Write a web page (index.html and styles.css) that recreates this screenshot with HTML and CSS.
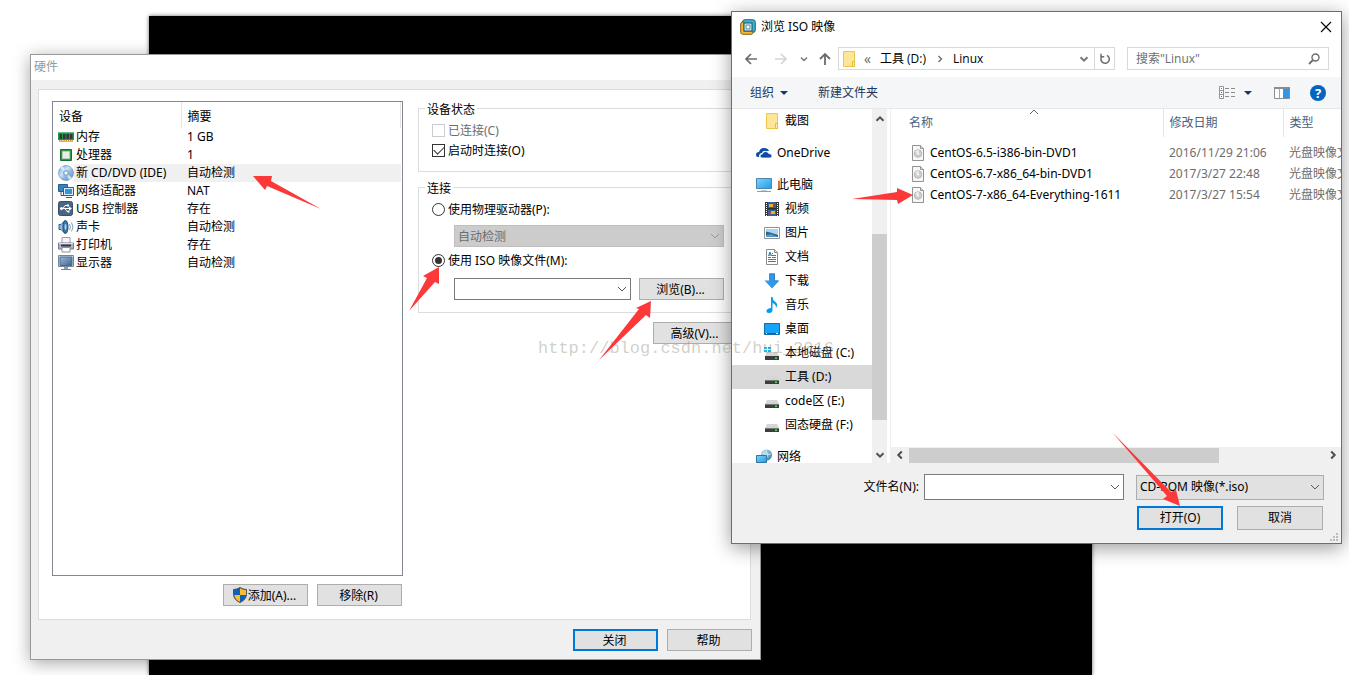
FILE: index.html
```html
<!DOCTYPE html>
<html lang="zh-CN">
<head>
<meta charset="utf-8">
<title>硬件</title>
<link rel="stylesheet" href="styles.css">
</head>
<body>
<svg class="defs" width="0" height="0" aria-hidden="true">
  <defs>
    <linearGradient id="screen" x1="0" y1="0" x2="1" y2="1"><stop offset="0" stop-color="#7fd3ff"/><stop offset="1" stop-color="#1f9be8"/></linearGradient>
    <linearGradient id="steel" x1="0" y1="0" x2="1" y2="1"><stop offset="0" stop-color="#9db9d6"/><stop offset="1" stop-color="#3d6490"/></linearGradient>
    <radialGradient id="globe" cx=".35" cy=".3" r=".8"><stop offset="0" stop-color="#bfe4f2"/><stop offset="1" stop-color="#2f7ea6"/></radialGradient>
    <linearGradient id="disc" x1="0" y1="0" x2="1" y2="1"><stop offset="0" stop-color="#6f9fd0"/><stop offset=".4" stop-color="#cfe2f4"/><stop offset=".6" stop-color="#8fb7de"/><stop offset="1" stop-color="#5f8fc4"/></linearGradient>
    <symbol id="chevron" viewBox="0 0 10 10"><path d="M1 3l4 4 4-4" fill="none" stroke="currentColor"/></symbol>
    <symbol id="thick-chevron" viewBox="0 0 10 10"><path d="M1.500 3.200L5 6.700l3.500-3.500" fill="none" stroke="currentColor" stroke-width="2"/></symbol>
    <symbol id="folder" viewBox="0 0 16 16"><path d="M2.500.5h11v15h-11z" fill="#ffe596" stroke="#edc64e"/><path d="M11.500 10.500h2v5h-2z" fill="#ffeeb5" stroke="#e8bc3a"/></symbol>
    <symbol id="drive" viewBox="0 0 16 16"><path d="M3 7h10l2 4H1z" fill="#d3d5d7"/><path d="M1 11h14v4H1z" fill="#3b3d40"/><path d="M1 11h14v1H1z" fill="#777"/><path d="M11 12.500h2v1.500h-2z" fill="#31ef3e"/></symbol>
    <symbol id="iso" viewBox="0 0 14 16"><path d="M1.500.5h8l3 3v12h-11z" fill="#f7f7f7" stroke="#929292"/><path d="M9.500.5v3h3" fill="#ddd" stroke="#929292"/><circle cx="7" cy="8.500" r="3.800" fill="#cdd1d1" stroke="#a3a8a8" stroke-width=".7"/><path d="M4 7a4 4 0 0 1 4-2L7 8z" fill="#eee"/><circle cx="7" cy="8.500" r="1" fill="#fff"/></symbol>
  </defs>
</svg>

<main class="desktop">
  <div class="console"></div>

  <section class="window hardware">
    <h1 class="hw-title">硬件</h1>
    <div class="hw-body">
      <div class="hw-panel">
        <div class="device-side">
          <div class="device-list">
            <table class="devices">
              <thead><tr><th>设备</th><th>摘要</th></tr></thead>
              <tbody>
                <tr><td><span class="device"><svg viewBox="0 0 16 16"><path d="M0 3h16v8H0z" fill="#1c9a4a"/><path d="M0 3h16v1H0z" fill="#5cc27e"/><path d="M1.500 5h2.500v5H1.500zM5 5h2.500v5H5zM8.500 5H11v5H8.500zM12 5h2.500v5H12z" fill="#34363a"/><path d="M1 11.500h14" stroke="#d59b2c" stroke-dasharray="1.500 .7"/><path d="M1 12.500h14" stroke="#a5c68e"/></svg><b>内存</b></span></td><td>1 GB</td></tr>
                <tr><td><span class="device"><svg viewBox="0 0 16 16"><path d="M2.500 2.500h11v11h-11z" fill="#2d9b48" stroke="#167030"/><path d="M4.500 4.500h7v7h-7z" fill="#ececec" stroke="#b3cdb9"/></svg><b>处理器</b></span></td><td>1</td></tr>
                <tr class="chosen"><td><span class="device"><svg viewBox="0 0 16 16"><circle cx="8" cy="8" r="7.500" fill="url(#disc)" stroke="#6790bd" stroke-width=".7"/><path d="M8 8L2 3l3-2zM8 8l6 5-3 2z" fill="#e7f2fb" opacity=".8"/><circle cx="8" cy="8" r="2.500" fill="#b6d0ea" stroke="#7ca2ca"/><circle cx="8" cy="8" r="1.200" fill="#fff"/></svg><b>新 CD/DVD (IDE)</b></span></td><td>自动检测</td></tr>
                <tr><td><span class="device"><svg viewBox="0 0 16 16"><path d="M.5 1.500h9v7h-9z" fill="#3683bd" stroke="#2c5d87"/><path d="M3 9v3.500h4" fill="none" stroke="#456"/><path d="M5.500 4.500h10v8h-10z" fill="#dceaf5" stroke="#3a5877"/><path d="M7 6h7v5H7z" fill="#2c97df"/><path d="M8 14.500h6" stroke="#3a5877"/></svg><b>网络适配器</b></span></td><td>NAT</td></tr>
                <tr><td><span class="device"><svg viewBox="0 0 16 16"><rect x=".5" y=".5" width="14" height="14" rx="2" fill="#4b6584" stroke="#36506d"/><path d="M2 7.500h10M5 7.500l2-3h3M7 7.500l2 3h2" fill="none" stroke="#fff"/><circle cx="3.500" cy="7.500" r="1.500" fill="#fff"/><path d="M11 5.500l3 2-3 2zM9 3.500h2v2H9zM9.500 9.500h2v2h-2z" fill="#fff"/></svg><b>USB 控制器</b></span></td><td>存在</td></tr>
                <tr><td><span class="device"><svg viewBox="0 0 16 16"><path d="M1 5.500h2L7 1.500v13L3 10.500H1z" fill="#8ebbe3" stroke="#335f89"/><ellipse cx="7.500" cy="8" rx="2.500" ry="6.500" fill="#3d77aa" stroke="#274a6b"/><ellipse cx="7.500" cy="8" rx="1" ry="3" fill="#aed5f4"/><path d="M11.500 5q2 3 0 6M13.500 3.500q3 4.500 0 9" fill="none" stroke="#7aa2c8"/></svg><b>声卡</b></span></td><td>自动检测</td></tr>
                <tr><td><span class="device"><svg viewBox="0 0 16 16"><path d="M4 .5h8v6H4z" fill="#f7f7fb" stroke="#9c9caf"/><path d="M.5 6h15v6H.5z" fill="#b3b3c1" stroke="#77778b"/><path d="M3 7.500h10v2H3z" fill="#333542"/><path d="M4 10.500h8V15H4z" fill="#fff" stroke="#8d8da0"/><path d="M1 6.500h14" stroke="#e4e4eb"/></svg><b>打印机</b></span></td><td>存在</td></tr>
                <tr><td><span class="device"><svg viewBox="0 0 16 16"><path d="M.5.500h15v11H.5z" fill="#d9e3ed" stroke="#71869a"/><path d="M2 2h12v8.500H2z" fill="url(#steel)" stroke="#496a8c"/><path d="M6 12h4v2H6z" fill="#8ca0b5"/><path d="M3 14.500h10" stroke="#71869a"/></svg><b>显示器</b></span></td><td>自动检测</td></tr>
              </tbody>
            </table>
          </div>
          <div class="device-actions">
            <button class="push"><svg class="shield" viewBox="0 0 14 16"><path d="M7 .5q3 2 6.500 2v5Q13 13 7 15.500 1 13 .5 7.500v-5Q4 2.500 7 .5z" fill="#0b62ba"/><path d="M7 1q3 2 6 2v5H7zM7 8v7Q2 13 1 8z" fill="#fcbd2f"/><path d="M7 .5q3 2 6.500 2v5Q13 13 7 15.500 1 13 .5 7.500v-5Q4 2.500 7 .5z" fill="none" stroke="#4b5258"/></svg>添加(A)...</button>
            <button class="push">移除(R)</button>
          </div>
        </div>

        <div class="settings">
          <fieldset class="group">
            <legend>设备状态</legend>
            <label class="option off"><input type="checkbox" disabled><span>已连接(C)</span></label>
            <label class="option"><input type="checkbox" checked><span>启动时连接(O)</span></label>
          </fieldset>
          <fieldset class="group connection">
            <legend>连接</legend>
            <label class="option"><input type="radio" name="source"><span>使用物理驱动器(P):</span></label>
            <div class="combo physical">
              <select disabled aria-label="物理驱动器"><option>自动检测</option></select>
              <svg class="combo-arrow"><use href="#chevron"/></svg>
            </div>
            <label class="option"><input type="radio" name="source" checked><span>使用 ISO 映像文件(M):</span></label>
            <div class="iso-row">
              <div class="combo">
                <select aria-label="ISO 映像文件"><option></option></select>
                <svg class="combo-arrow"><use href="#chevron"/></svg>
              </div>
              <button class="push">浏览(B)...</button>
            </div>
          </fieldset>
          <button class="push advanced">高级(V)...</button>
        </div>
      </div>
      <div class="hw-actions">
        <button class="push primary">关闭</button>
        <button class="push">帮助</button>
      </div>
    </div>
  </section>

  <section class="window browse">
    <header class="br-title">
      <svg class="app-icon" viewBox="0 0 16 16"><rect x="2.500" y=".7" width="12.800" height="12.800" rx="2.500" fill="#35b4d4" stroke="#246179"/><path d="M.7 5q0-2 2-2H4v9h9v1.300q0 2-2 2H3q-2.300 0-2.300-2.300z" fill="#f9b629" stroke="#7c6127"/><rect x="4" y="4" width="8" height="8" fill="#fff" stroke="#285a70" stroke-width="1.200"/><rect x="6" y="6" width="4" height="4" fill="#fff" stroke="#3a8ba8"/></svg>
      <h2>浏览 ISO 映像</h2>
      <button class="plain close" aria-label="关闭"><svg viewBox="0 0 12 12"><path d="M1 1l10 10M11 1L1 11" stroke="#000" stroke-width="1.100"/></svg></button>
    </header>

    <nav class="br-nav">
      <button class="plain step" aria-label="后退"><svg viewBox="0 0 14 14"><path d="M13 7H2M7 2L2 7l5 5" fill="none" stroke="#6b6b6b" stroke-width="1.700"/></svg></button>
      <button class="plain step" aria-label="前进"><svg viewBox="0 0 14 14"><path d="M1 7h11M7 2l5 5-5 5" fill="none" stroke="#d4d4d4" stroke-width="1.700"/></svg></button>
      <button class="plain recent" aria-label="最近的位置"><svg viewBox="0 0 10 10"><path d="M2 3.500l3 3 3-3" fill="none" stroke="#777" stroke-width="1.500"/></svg></button>
      <button class="plain up" aria-label="上移"><svg viewBox="0 0 14 14"><path d="M7 13V2M2 7l5-5 5 5" fill="none" stroke="#6b6b6b" stroke-width="1.800"/></svg></button>
      <div class="address">
        <svg class="icon16"><use href="#folder"/></svg>
        <span class="crumb-sep">«</span>
        <a href="#d">工具 (D:)</a>
        <svg class="crumb-arrow" viewBox="0 0 10 10"><path d="M3.500 2l3 3-3 3" fill="none" stroke="#666" stroke-width="1.300"/></svg>
        <a href="#linux">Linux</a>
        <svg class="address-arrow"><use href="#thick-chevron"/></svg>
        <button class="plain refresh" aria-label="刷新"><svg viewBox="0 0 12 12"><path d="M3 3.200A4.200 4.200 0 1 0 8 2.300M2 .8v3h3.200" fill="none" stroke="#6d6d6d" stroke-width="1.500"/></svg></button>
      </div>
      <div class="search">
        <input type="text" placeholder='搜索"Linux"' aria-label="搜索">
        <svg viewBox="0 0 12 12"><circle cx="7.500" cy="4.500" r="3.500" fill="none" stroke="#6d6d6d" stroke-width="1.400"/><path d="M5 7l-4 4" stroke="#6d6d6d" stroke-width="1.800"/></svg>
      </div>
    </nav>

    <div class="br-tools">
      <button class="plain organize">组织 <svg viewBox="0 0 8 4"><path d="M0 0h8L4 4z" fill="#1b3860"/></svg></button>
      <button class="plain">新建文件夹</button>
      <span class="view-tools">
        <button class="plain view" aria-label="视图"><svg viewBox="0 0 17 14"><path d="M.5.500h4v12h-4zM.5 4.500h4M.5 8.500h4" fill="#fff" stroke="#949494"/><path d="M2 2h1v1H2z" fill="#777"/><path d="M2 6h1v1H2z" fill="#35a"/><path d="M2 10h1v1H2z" fill="#c33"/><path d="M6 2.500h4M12 2.500h4M6 6.500h4M12 6.500h4M6 10.500h4M12 10.500h4" stroke="#8b8b8b"/></svg></button>
        <button class="plain caret" aria-label="更多视图"><svg viewBox="0 0 8 4"><path d="M0 0h8L4 4z" fill="#1b3860"/></svg></button>
        <button class="plain preview" aria-label="预览窗格"><svg viewBox="0 0 16 12"><path d="M.5.500h15v11H.5z" fill="#fff" stroke="#858e96"/><path d="M0 0h16v2H0z" fill="#858e96"/><path d="M9 2h6v9H9z" fill="#3096e8"/><path d="M5.500 2v9" stroke="#a3a9ae"/></svg></button>
        <button class="plain help" aria-label="帮助">?</button>
      </span>
    </div>

    <div class="br-content">
      <ul class="tree">
        <li class="sub"><a href="#shots"><svg class="icon16"><use href="#folder"/></svg>截图</a></li>
        <li class="top"><a href="#onedrive"><svg class="icon16" viewBox="0 0 16 16"><path d="M0 10q0-3 3-3 1-4 5-4 4 0 5 3-2 0-3 0-3-1-4 2-3 0-3 4H2q-2 0-2-2z" fill="#0d4ba8"/><path d="M4 11q0-2 2.500-2.200Q7 6.500 9.500 6.500q2.500 0 3.200 2Q16 8.500 16 11q0 2-2 2H6q-2 0-2-2z" fill="#0d4ba8" stroke="#fff" stroke-width=".8"/></svg>OneDrive</a></li>
        <li class="top"><a href="#pc"><svg class="icon16" viewBox="0 0 16 16"><path d="M.5 1.500h15v10H.5z" fill="url(#screen)" stroke="#4b87a9"/><path d="M1 14.500h14" stroke="#8b9eaa"/><path d="M5 13.500h6" stroke="#c0cdd5"/></svg>此电脑</a></li>
        <li class="sub"><a href="#video"><svg class="icon16" viewBox="0 0 16 16"><path d="M1 1h14v14H1z" fill="#37383a"/><path d="M4 1h8v14H4z" fill="#2f62a4"/><path d="M4 7h8v1.500H4z" fill="#232"/><path d="M5 3h4v3H5zM7 10h4v3H7z" fill="#e8b02c"/><path d="M9 2h2v3H9zM5 11h2v3H5z" fill="#b53f32"/><path d="M2.500 2v13M13.500 2v13" stroke="#fff" stroke-dasharray="1 1"/></svg>视频</a></li>
        <li class="sub"><a href="#pictures"><svg class="icon16" viewBox="0 0 16 16"><path d="M.5 2.500h15v11H.5z" fill="#fff" stroke="#929292"/><path d="M2 4h12v8H2z" fill="#a7d5f4"/><path d="M2 6.500l4 1 8 2.500v2H2z" fill="#2b6573"/><path d="M2 10l5-1 7 3H2z" fill="#5796d4"/></svg>图片</a></li>
        <li class="sub"><a href="#docs"><svg class="icon16" viewBox="0 0 16 16"><path d="M2.500.5h8l3 3v12h-11z" fill="#fff" stroke="#8c8c8c"/><path d="M10.500.5v3h3" fill="#ddd" stroke="#8c8c8c"/><path d="M8 4.500h1M8 6.500h4M4 8.500h3M8 8.500h4M4 10.500h8M4 12.500h8" stroke="#2e84b5"/><path d="M4.500 7l1.500-4 1.500 4M5 6h2" fill="none" stroke="#2b79b0"/></svg>文档</a></li>
        <li class="sub"><a href="#downloads"><svg class="icon16" viewBox="0 0 16 16"><path d="M5 .5h6v7h4.500L8 15.500.5 7.500H5z" fill="#3297e6"/><path d="M5.500 1h5v7h3.500" fill="none" stroke="#2584cf"/></svg>下载</a></li>
        <li class="sub"><a href="#music"><svg class="icon16" viewBox="0 0 16 16"><path d="M7 0h1.500q0 3 3 5t.5 6q0-4-3.500-5v7q0 3-3.500 3-3 0-2.500-2.500Q3.500 11 7 11z" fill="#079af0"/></svg>音乐</a></li>
        <li class="sub"><a href="#desk"><svg class="icon16" viewBox="0 0 16 16"><path d="M.5 2.500h15v11H.5z" fill="#16a3fa" stroke="#1a6ba2"/><path d="M1 12.500h14" stroke="#1266a3"/><path d="M2 12.500h1M12 12.500h2" stroke="#fff"/></svg>桌面</a></li>
        <li class="sub"><a href="#c"><svg class="icon16" viewBox="0 0 16 16"><path d="M3 7h10l2 4H1z" fill="#d3d5d7"/><path d="M1 11h14v4H1z" fill="#3b3d40"/><path d="M11 12.500h2v1.500h-2z" fill="#31ef3e"/><path d="M0 2h3v2H0zM4 2h3v2H4zM0 5h3v2H0zM4 5h3v2H4z" fill="#12b9e8"/></svg>本地磁盘 (C:)</a></li>
        <li class="sub current"><a href="#d"><svg class="icon16"><use href="#drive"/></svg>工具 (D:)</a></li>
        <li class="sub"><a href="#e"><svg class="icon16"><use href="#drive"/></svg>code区 (E:)</a></li>
        <li class="sub"><a href="#f"><svg class="icon16"><use href="#drive"/></svg>固态硬盘 (F:)</a></li>
        <li class="top"><a href="#net"><svg class="icon16" viewBox="0 0 16 16"><circle cx="10.500" cy="6" r="5.500" fill="url(#globe)"/><path d="M6 4q4 3 9 1M10 1q3 5 0 10" fill="none" stroke="#d3edf8" stroke-width=".8"/><path d="M.5 6.500h10v7H.5z" fill="url(#screen)" stroke="#32759d"/></svg>网络</a></li>
      </ul>
      <div class="vscroll">
        <svg class="flip"><use href="#thick-chevron"/></svg>
        <div class="vtrack"><div class="vthumb"></div></div>
        <svg><use href="#thick-chevron"/></svg>
      </div>
      <div class="files-pane">
        <div class="files-clip">
          <svg class="sort" viewBox="0 0 10 6"><path d="M1 5l4-4 4 4" fill="none" stroke="#666"/></svg>
          <table class="files">
            <thead><tr><th class="name">名称</th><th class="date">修改日期</th><th class="kind">类型</th></tr></thead>
            <tbody>
              <tr><td><span class="file"><svg><use href="#iso"/></svg>CentOS-6.5-i386-bin-DVD1</span></td><td>2016/11/29 21:06</td><td>光盘映像文件</td></tr>
              <tr><td><span class="file"><svg><use href="#iso"/></svg>CentOS-6.7-x86_64-bin-DVD1</span></td><td>2017/3/27 22:48</td><td>光盘映像文件</td></tr>
              <tr><td><span class="file"><svg><use href="#iso"/></svg>CentOS-7-x86_64-Everything-1611</span></td><td>2017/3/27 15:54</td><td>光盘映像文件</td></tr>
            </tbody>
          </table>
        </div>
        <div class="hscroll">
          <svg class="to-left"><use href="#thick-chevron"/></svg>
          <div class="htrack"><div class="hthumb"></div></div>
          <svg class="to-right"><use href="#thick-chevron"/></svg>
        </div>
      </div>
    </div>

    <footer class="br-footer">
      <div class="name-row">
        <label for="filename">文件名(N):</label>
        <div class="combo filename">
          <input type="text" id="filename">
          <svg class="combo-arrow"><use href="#chevron"/></svg>
        </div>
        <div class="combo filetype">
          <select aria-label="文件类型"><option>CD-ROM 映像(*.iso)</option></select>
          <svg class="combo-arrow"><use href="#chevron"/></svg>
        </div>
      </div>
      <div class="open-row">
        <button class="push primary">打开(O)</button>
        <button class="push">取消</button>
      </div>
      <svg class="grip" viewBox="0 0 8 8"><path d="M6 0h2v2H6zM3 3h2v2H3zM6 3h2v2H6zM0 6h2v2H0zM3 6h2v2H3zM6 6h2v2H6z" fill="#bcbcbc"/></svg>
    </footer>
  </section>

  <p class="watermark">http://blog.csdn.net/hui_2016</p>
  <svg class="arrows" width="1349" height="675" viewBox="0 0 1349 675" aria-hidden="true">
    <g fill="#fd3838">
      <path d="M253 176l19 0-1 5 50 28-54-23-2 4z"/>
      <path d="M439 267v17l-4-2-26 29 18-33-4-2z"/>
      <path d="M651 301l-1 17-4-3-47 45 40-51-3-1z"/>
      <path d="M913 195l-15 9-1-4-45-1 45-7v-4z"/>
      <path d="M1180 506l-17-7 4-3-55-64 59 60 5-2z"/>
    </g>
  </svg>
</main>
</body>
</html>
```
FILE: styles.css
```css
* { box-sizing: border-box; }

body {
  margin: 0;
  background: #fff;
  color: #000;
  font: 12px/16px "Noto Sans", "Noto Sans CJK SC", sans-serif;
}

button, input, select { font: inherit; color: inherit; }
a { color: inherit; text-decoration: none; }
svg { display: block; flex: none; }
.defs { position: absolute; }

.desktop {
  position: relative;
  min-height: 100vh;
  overflow: hidden;
}

.console {
  position: absolute;
  left: 149px;
  top: 16px;
  bottom: 0;
  width: 943px;
  background: #000;
  box-shadow: 0 0 4px rgba(0, 0, 0, .6);
}

.window { position: absolute; }

/* Shared controls */
.push {
  width: 85px;
  height: 22px;
  padding: 0;
  border: 1px solid #adadad;
  background: #e1e1e1;
  display: inline-flex;
  align-items: center;
  justify-content: center;
  white-space: nowrap;
}
.push.primary { border: 2px solid #0078d7; }
.plain {
  padding: 0;
  border: 0;
  background: none;
  display: inline-flex;
  align-items: center;
  justify-content: center;
}
.combo { display: grid; align-items: center; }
.combo > * { grid-area: 1 / 1; }
.combo select, .combo input {
  appearance: none;
  width: 100%;
  height: 22px;
  margin: 0;
  padding: 0 20px 0 3px;
  border: 1px solid #7a7a7a;
  border-radius: 0;
  background: #fff;
}
.combo-arrow {
  width: 10px;
  height: 10px;
  margin-right: 4px;
  justify-self: end;
  color: #555;
  pointer-events: none;
}
.icon16 { width: 16px; height: 16px; }

/* Hardware window */
.hardware {
  left: 30px;
  top: 54px;
  width: 731px;
  border: 1px solid #999;
  background: #f0f0f0;
  box-shadow: 0 3px 16px rgba(0, 0, 0, .35);
}
.hardware .push { padding: 2px 2px 0 0; }
.hw-title {
  height: 25px;
  margin: 0;
  padding: 4px 3px;
  background: #fff;
  color: #999;
  font-size: 12px;
  font-weight: 400;
}
.hw-body { padding: 9px 8px 8px 7px; }
.hw-panel {
  display: flex;
  gap: 15px;
  margin-right: 1px;
  padding: 11px 12px 13px 13px;
  border: 1px solid #dcdcdc;
  background: #fff;
}
.device-side {
  width: 351px;
  display: flex;
  flex-direction: column;
  gap: 8px;
}
.device-list {
  height: 475px;
  padding-right: 1px;
  border: 1px solid #828790;
}
.devices {
  width: 100%;
  table-layout: fixed;
  border-collapse: collapse;
}
.devices th {
  height: 26px;
  padding: 4px 6px 0;
  border-right: 1px solid #e5e5e5;
  text-align: left;
  font-weight: 400;
}
.devices th:first-child { width: 128px; }
.devices td {
  height: 18px;
  padding: 0 6px;
  line-height: 18px;
}
.devices td:first-child { padding: 0 0 0 5px; }
.device { display: flex; align-items: center; }
.device svg { width: 16px; height: 16px; }
.device b { flex: 1; padding-left: 2px; font-weight: 400; }
.chosen td:last-child, .chosen b { background: #f0f0f0; }
.device-actions { display: flex; justify-content: flex-end; gap: 9px; padding-right: 1px; }
.shield { width: 14px; height: 16px; margin: 0 1px 2px 0; }

.settings { flex: 1; display: flex; flex-direction: column; }
.group {
  min-width: 0;
  margin: 0;
  padding: 5px 13px 11px;
  border: 1px solid #dcdcdc;
}
.group legend {
  height: 14px;
  margin-left: -7px;
  padding: 0 2px;
  line-height: 18px;
}
.option {
  height: 20px;
  display: flex;
  align-items: center;
  gap: 3px;
}
.option span { padding-top: 2px; }
.option.off { color: #6d6d6d; }
.option input {
  appearance: none;
  width: 13px;
  height: 13px;
  margin: 0;
  border: 1px solid #333;
  background: #fff;
  display: grid;
  place-items: center;
}
.option input:disabled { border-color: #ccc; }
.option input[type="checkbox"]:checked::after {
  content: "";
  width: 9px;
  height: 5px;
  border: solid #333;
  border-width: 0 0 1px 1px;
  transform: translateY(-1px) rotate(-45deg);
}
.option input[type="radio"] { border-radius: 50%; }
.option input[type="radio"]:checked::after {
  content: "";
  width: 7px;
  height: 7px;
  border-radius: 50%;
  background: #333;
}
.connection { margin-top: 8px; padding-bottom: 12px; }
.physical { margin: 6px 0 3px 22px; }
.combo.physical select {
  padding-top: 2px;
  border-color: #bfbfbf;
  background: #ccc;
  color: #6d6d6d;
  opacity: 1;
}
.physical .combo-arrow { color: #999; }
.iso-row { display: flex; gap: 8px; margin: 8px 0 0 22px; }
.iso-row .combo { flex: 1; }
.advanced { margin-top: 9px; align-self: flex-end; }
.hw-actions { display: flex; justify-content: flex-end; gap: 9px; padding-top: 9px; }

/* Browse window */
.browse {
  left: 731px;
  top: 11px;
  width: 611px;
  border: 1px solid #1883d7;
  background: #fff;
  box-shadow: 0 4px 18px rgba(0, 0, 0, .4);
}
.br-title {
  height: 30px;
  padding: 0 9px 0 8px;
  display: flex;
  align-items: center;
  gap: 5px;
}
.app-icon { width: 16px; height: 16px; }
.br-title h2 { margin: 0; font-size: 12px; font-weight: 400; }
.close { margin-left: auto; }
.close svg { width: 12px; height: 12px; }

.br-nav {
  display: flex;
  align-items: center;
  padding: 5px 12px 7px 12px;
}
.step { width: 14px; margin-right: 16px; }
.step svg, .up svg { width: 14px; height: 14px; }
.recent { width: 10px; margin-left: -5px; }
.recent svg { width: 10px; height: 10px; }
.up { width: 14px; margin: 0 6px 0 9px; }
.address {
  flex: 1;
  height: 23px;
  display: flex;
  align-items: center;
  padding-left: 2px;
  border: 1px solid #d9d9d9;
  font-family: "Open Sans", "Noto Sans CJK SC", sans-serif;
}
.crumb-sep { margin: 0 9px 0 7px; color: #666; font-size: 14px; }
.crumb-arrow { width: 10px; height: 10px; margin: 0 8px 0 9px; }
.address-arrow { width: 10px; height: 10px; margin: 0 5px 0 auto; color: #777; }
.refresh { width: 20px; height: 100%; border-left: 1px solid #d9d9d9; }
.refresh svg { width: 12px; height: 12px; }
.search {
  width: 202px;
  height: 23px;
  margin-left: 12px;
  padding: 0 8px;
  border: 1px solid #d9d9d9;
  display: flex;
  align-items: center;
}
.search input {
  flex: 1;
  min-width: 0;
  padding: 0;
  border: 0;
  outline: 0;
  font-family: "Open Sans", "Noto Sans CJK SC", sans-serif;
}
.search input::placeholder { color: #6d6d6d; }
.search svg { width: 12px; height: 12px; }

.br-tools {
  height: 32px;
  display: flex;
  align-items: center;
  padding: 0 15px 0 18px;
  border-bottom: 1px solid #e5e7e9;
  background: #f5f6f7;
  color: #1b3860;
}
.organize { gap: 6px; margin-right: 30px; }
.organize svg, .caret svg { width: 8px; height: 4px; }
.view-tools { margin-left: auto; display: flex; align-items: center; }
.view svg { width: 17px; height: 14px; }
.caret { margin: 0 22px 0 8px; }
.preview svg { width: 16px; height: 12px; }
.help {
  width: 16px;
  height: 16px;
  margin-left: 20px;
  border-radius: 50%;
  background: #0365c0;
  color: #fff;
  font-size: 13px;
  font-weight: 700;
}

.br-content { height: 354px; display: flex; overflow: hidden; }
.tree {
  width: 140px;
  margin: 0;
  padding: 0;
  list-style: none;
}
.tree a {
  height: 24px;
  display: flex;
  align-items: center;
  gap: 5px;
  padding-left: 32px;
  white-space: nowrap;
}
.tree .top a { height: 32px; padding: 8px 0 0 24px; }
.vscroll {
  width: 15px;
  display: flex;
  flex-direction: column;
  align-items: center;
  padding: 5px 0 3px;
  background: #f0f0f0;
  color: #505050;
}
.tree .current { background: #d9d9d9; }
.vscroll svg, .hscroll svg { width: 10px; height: 10px; }
.flip { transform: rotate(180deg); }
.vtrack { flex: 1; width: 100%; padding-top: 110px; }
.vthumb { height: 186px; background: #cdcdcd; }
.files-pane {
  flex: 1;
  min-width: 0;
  margin-left: 3px;
  border-left: 1px solid #f0f0f0;
  display: flex;
  flex-direction: column;
}
.files-clip { position: relative; flex: 1; overflow: hidden; }
.sort { position: absolute; left: 138px; top: 0; width: 10px; height: 6px; }
.files { width: 480px; table-layout: fixed; border-collapse: collapse; }
.files th {
  height: 28px;
  padding: 0 6px;
  border-right: 1px solid #e5e5e5;
  color: #4c607a;
  font-weight: 400;
  text-align: left;
}
.files th.name { width: 272px; padding-left: 18px; }
.files th.date { width: 120px; }
.files td {
  height: 21px;
  padding: 0 6px;
  color: #6d6d6d;
  white-space: nowrap;
}
.files td:first-child { padding-left: 20px; color: #000; }
.files tbody::before { content: ""; display: block; height: 5px; }
.file { display: flex; align-items: center; gap: 5px; }
.file svg { width: 14px; height: 16px; }
.hscroll {
  height: 16px;
  display: flex;
  align-items: center;
  padding: 0 3px 0 4px;
  background: #f0f0f0;
  color: #505050;
}
.to-left { transform: rotate(90deg); }
.to-right { transform: rotate(-90deg); }
.htrack { flex: 1; padding-left: 4px; }
.hthumb { width: 310px; height: 15px; background: #cdcdcd; }

.br-footer {
  position: relative;
  height: 80px;
  padding: 11px 17px 0;
  background: #f0f0f0;
}
.name-row, .open-row { display: flex; justify-content: flex-end; align-items: center; }
.filename { width: 200px; margin: 0 12px 0 5px; }
.filetype { width: 188px; }
.combo.filename input { height: 26px; }
.combo.filetype select { height: 25px; border-color: #adadad; background: #e1e1e1; }
.open-row { gap: 14px; margin-top: 6px; padding-right: 1px; }
.open-row .push { width: 86px; height: 24px; }
.grip { position: absolute; right: 3px; bottom: 2px; width: 8px; height: 8px; }

/* Layers over the windows */
.watermark {
  position: absolute;
  left: 538px;
  top: 339px;
  margin: 0;
  color: rgba(150, 150, 135, .45);
  font: 17px/20px "Liberation Mono", monospace;
  pointer-events: none;
}
.arrows { position: absolute; left: 0; top: 0; pointer-events: none; }
```
